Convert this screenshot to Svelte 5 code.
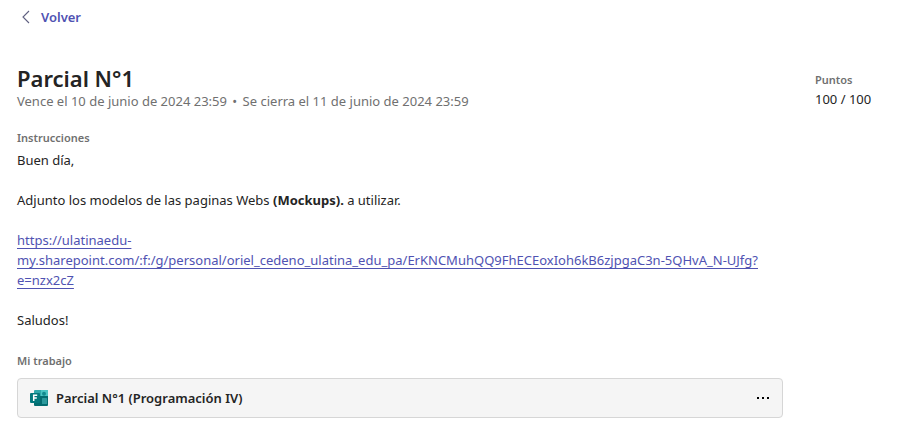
<script>
  const title = 'Parcial N°1';
  const link =
    'https://ulatinaedu-my.sharepoint.com/:f:/g/personal/oriel_cedeno_ulatina_edu_pa/ErKNCMuhQQ9FhECEoxIoh6kB6zjpgaC3n-5QHvA_N-UJfg?e=nzx2cZ';
  const [host, path, query] = link.split(/(?<=ulatinaedu-)|(?<=\?)/);
</script>

<div class="page">
  <nav>
    <button class="back" type="button">
      <svg width="10" height="14" viewBox="0 0 10 14" aria-hidden="true">
        <path d="M8 1 2 7l6 6" fill="none" stroke="#5f6080" stroke-width="1.1" />
      </svg>
      Volver
    </button>
  </nav>

  <header>
    <div class="main">
      <h1>{title}</h1>
      <p class="dates">
        Vence el 10 de junio de 2024 23:59 <span class="dot">•</span> Se cierra el 11 de junio de 2024 23:59
      </p>
    </div>
    <div class="points">
      <h2>Puntos</h2>
      <p>100 / 100</p>
    </div>
  </header>

  <section>
    <h2>Instrucciones</h2>
    <div class="text">
      <p>Buen día,</p>
      <p>Adjunto los modelos de las paginas Webs <strong>(Mockups).</strong> a utilizar.</p>
      <p><a href={link}>{host}<wbr /><span class="path">{path}</span><wbr />{query}</a></p>
      <p>Saludos!</p>
    </div>
  </section>

  <section class="work">
    <h2>Mi trabajo</h2>
    <div class="card">
      <svg width="18" height="16" viewBox="0 0 18 16" aria-hidden="true">
        <path d="M5 0h12a1 1 0 0 1 1 1v6H4V1a1 1 0 0 1 1-1z" fill="#2fa9ab" />
        <path d="M11 0h6a1 1 0 0 1 1 1v6h-7z" fill="#4ac4c3" />
        <path d="M4 6h14v9a1 1 0 0 1-1 1H5a1 1 0 0 1-1-1z" fill="#036c70" />
        <circle cx="14" cy="3.8" r="2" fill="#128a8e" />
        <rect x="12" y="8" width="5" height="6" rx=".6" fill="#2c999c" />
        <rect y="3" width="10" height="10" rx="1" fill="#03787c" />
        <path d="M3.7 11V5.2h3.5M3.7 8.1h3.1" fill="none" stroke="#fff" stroke-width="1.5" />
      </svg>
      <span class="name">{title} (Programación IV)</span>
      <button class="more" type="button" aria-label="Más opciones">
        <svg width="14" height="4" viewBox="0 0 14 4" aria-hidden="true">
          <rect x="1" y="1" width="2" height="2" />
          <rect x="6" y="1" width="2" height="2" />
          <rect x="11" y="1" width="2" height="2" />
        </svg>
      </button>
    </div>
  </section>
</div>

<style>
  :global(body) {
    background: #fff;
  }
  .page {
    padding: 7px 17px 14px;
    font: 13px/20px 'Segoe UI', 'Noto Sans', sans-serif;
    color: #242424;
  }
  h1,
  h2,
  p {
    margin: 0;
  }
  button {
    border: 0;
    padding: 0;
    background: none;
    font: inherit;
    color: inherit;
  }
  .back {
    display: flex;
    align-items: center;
    gap: 10px;
    padding-left: 4px;
    font-weight: 600;
    color: #4f52b2;
  }
  header {
    display: flex;
    gap: 32px;
    margin-top: 36px;
  }
  .main {
    flex: 1;
  }
  h1 {
    font-size: 22px;
    line-height: 30px;
    font-weight: 600;
  }
  h2 {
    font-size: 11px;
    line-height: 16px;
    font-weight: 600;
    color: #707070;
  }
  .dates {
    line-height: 16px;
    color: #707070;
  }
  .dot {
    margin: 0 2px;
  }
  .points {
    width: 72px;
    padding-top: 9px;
    white-space: nowrap;
  }
  .points p {
    line-height: 16px;
    margin-top: 3px;
  }
  section {
    max-width: 766px;
    margin-top: 21px;
  }
  .work {
    margin-top: 23px;
  }
  .text {
    display: flex;
    flex-direction: column;
    gap: 20px;
    margin-top: 4px;
  }
  a {
    color: #4f52b2;
    text-decoration: underline;
    text-decoration-skip-ink: none;
    text-underline-offset: 3px;
  }
  .path {
    white-space: nowrap;
  }
  .card {
    display: flex;
    align-items: center;
    gap: 8px;
    box-sizing: border-box;
    margin-top: 9px;
    padding: 9px 12px;
    border: 1px solid #d6d6d6;
    border-radius: 4px;
    background: #f5f5f5;
  }
  .name {
    flex: 1;
    font-weight: 600;
  }
  .more {
    display: flex;
  }
</style>
